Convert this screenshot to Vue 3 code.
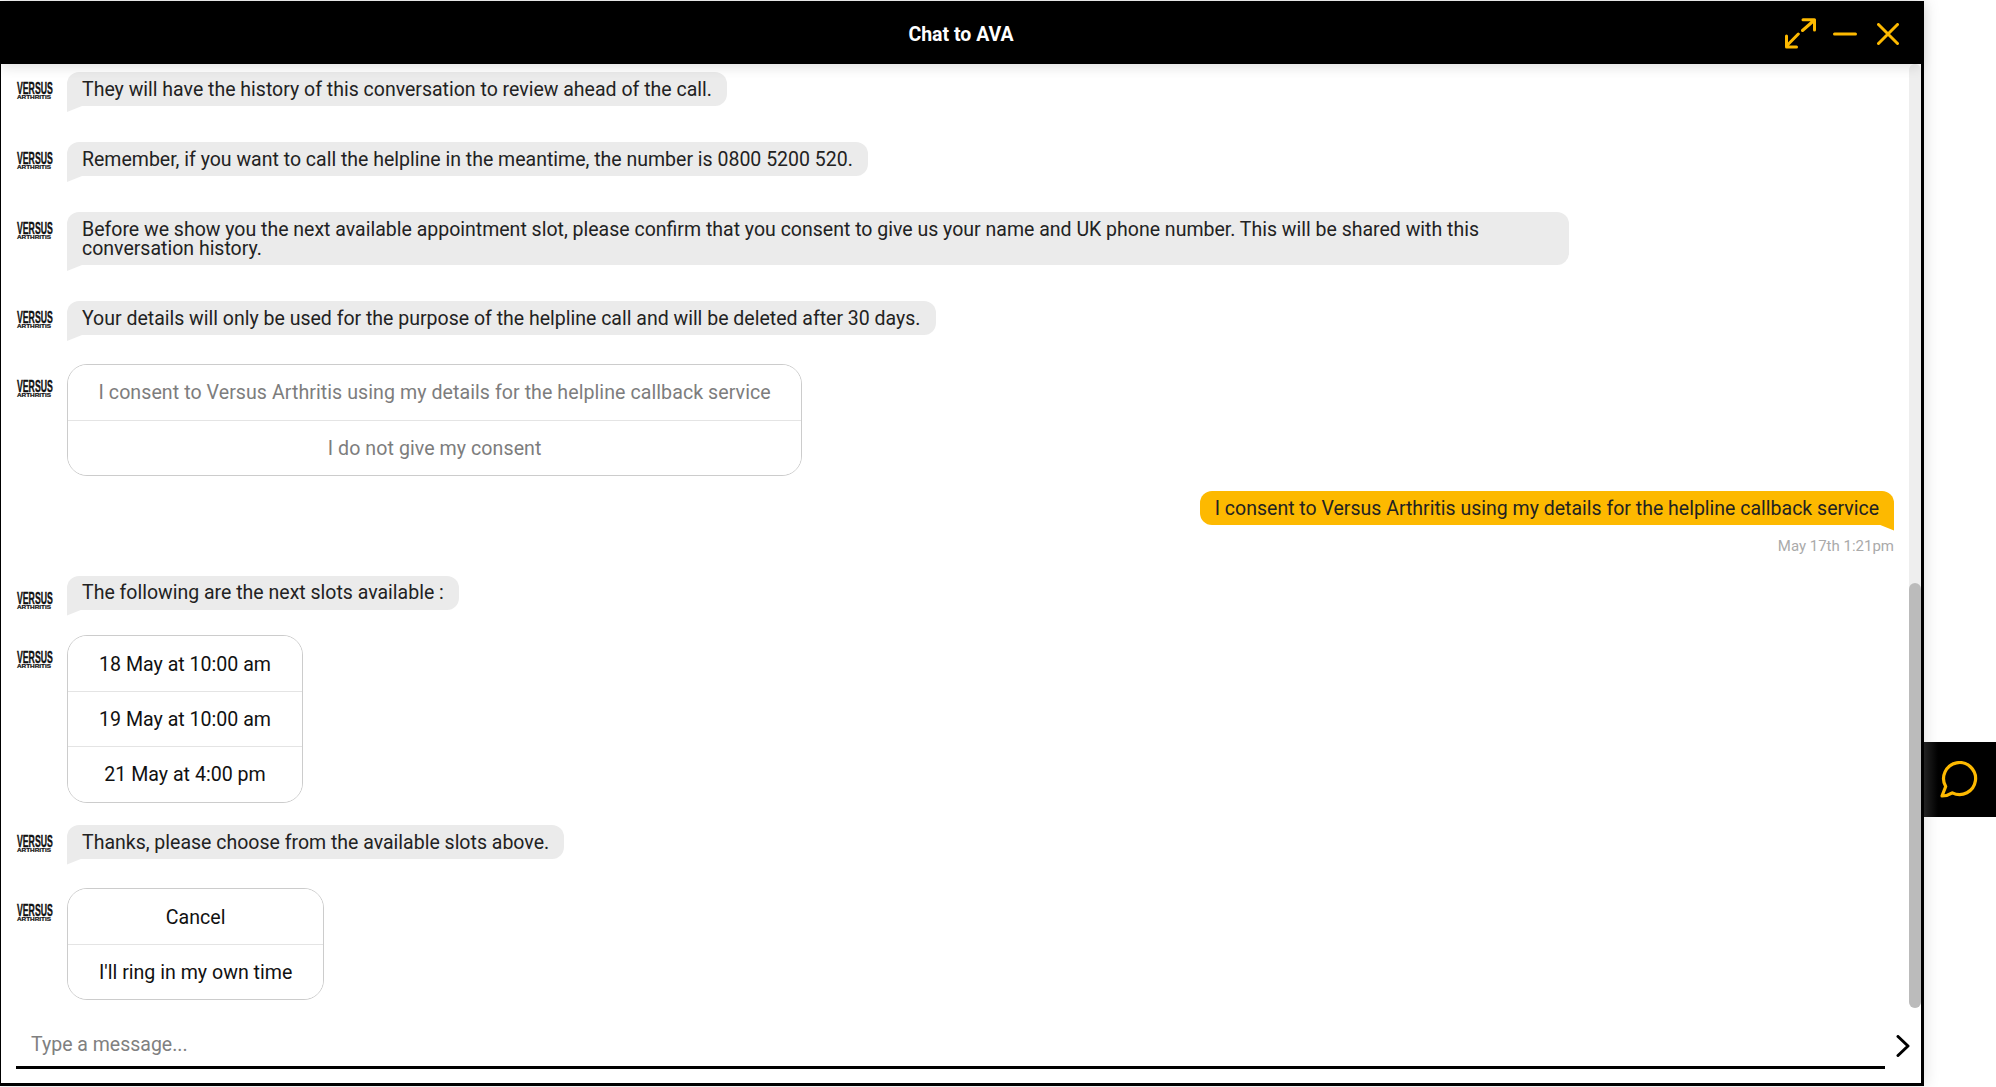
<script setup>
const rows = [
  { type: 'bot', text: 'They will have the history of this conversation to review ahead of the call.', gap: 36 },
  { type: 'bot', text: 'Remember, if you want to call the helpline in the meantime, the number is 0800 5200 520.', gap: 36 },
  { type: 'bot', text: 'Before we show you the next available appointment slot, please confirm that you consent to give us your name and UK phone number. This will be shared with this conversation history.', gap: 36, wide: true },
  { type: 'bot', text: 'Your details will only be used for the purpose of the helpline call and will be deleted after 30 days.', gap: 29 },
  { type: 'opts', options: ['I consent to Versus Arthritis using my details for the helpline callback service', 'I do not give my consent'], muted: true, gap: 15 },
  { type: 'me', text: 'I consent to Versus Arthritis using my details for the helpline callback service', time: 'May 17th 1:21pm', gap: 21 },
  { type: 'bot', text: 'The following are the next slots available :', gap: 25, low: true },
  { type: 'opts', options: ['18 May at 10:00 am', '19 May at 10:00 am', '21 May at 4:00 pm'], gap: 22 },
  { type: 'bot', text: 'Thanks, please choose from the available slots above.', gap: 29 },
  { type: 'opts', options: ['Cancel', "I'll ring in my own time"], gap: 0 }
]
</script>

<template>
  <div class="page">
    <section class="window">
      <header class="head">
        <h1 class="title">Chat to AVA</h1>
        <div class="controls">
          <svg class="ic" width="31" height="31" viewBox="0 0 31 31" fill="none" stroke="#fdb900" stroke-width="3" stroke-linecap="round" stroke-linejoin="round">
            <path d="M18 1.700h11.500V12M17.500 12.500 29.500 2M13.300 16 1.500 28M1.500 18v11h10" />
          </svg>
          <svg class="ic minus" width="24" height="4" viewBox="0 0 24 4" fill="none" stroke="#fdb900" stroke-width="3" stroke-linecap="round">
            <path d="M1.500 2h21" />
          </svg>
          <svg class="ic close" width="22" height="22" viewBox="0 0 22 22" fill="none" stroke="#fdb900" stroke-width="3" stroke-linecap="round">
            <path d="M1.500 1.500l19 19M20.500 1.500l-19 19" />
          </svg>
        </div>
      </header>

      <div class="body">
        <div class="content">
          <div class="list">
            <template v-for="(r, i) in rows" :key="i">
              <div v-if="r.type === 'me'" class="me" :style="{ marginBottom: r.gap + 'px' }">
                <div class="me-bubble">{{ r.text }}</div>
                <div class="time">{{ r.time }}</div>
              </div>
              <div v-else class="bot" :class="{ low: r.low || r.type === 'opts' }" :style="{ marginBottom: r.gap + 'px' }">
                <div class="logo"><span class="l1">VERSUS</span><span class="l2">ARTHRITIS</span></div>
                <div v-if="r.type === 'bot'" class="bubble" :class="{ wide: r.wide }">{{ r.text }}</div>
                <div v-else class="opts" :class="{ muted: r.muted }">
                  <button v-for="o in r.options" :key="o" class="opt">{{ o }}</button>
                </div>
              </div>
            </template>
          </div>
          <div class="track"><div class="thumb"></div></div>
        </div>
        <div class="composer">
          <div class="input">Type a message...</div>
          <svg class="send" width="14" height="22" viewBox="0 0 14 22" fill="none" stroke="#000" stroke-width="3" stroke-linecap="round" stroke-linejoin="round">
            <path d="M2 1.500 12 11 2 20.500" />
          </svg>
        </div>
      </div>
    </section>

    <aside class="tab">
      <svg width="38" height="37" viewBox="0 0 38 37" fill="none" stroke="#fdb900" stroke-width="3.200" stroke-linejoin="round">
        <path d="M2 35 5.700 25.500A16 16 0 1 1 12.300 31.800Q7.500 34.800 2 35Z" />
      </svg>
    </aside>
  </div>
</template>

<style>
html, body { margin: 0; background: #fff; overflow: hidden; }
</style>

<style scoped>
.page {
  width: 1996px;
  height: 1087px;
  position: relative;
  overflow: hidden;
  font-family: Roboto, "Liberation Sans", sans-serif;
  background: #fff;
  padding-top: 1px;
  box-sizing: border-box;
}
.window {
  width: 1924px;
  height: 1085px;
  box-sizing: border-box;
  border-left: 1px solid #000;
  border-right: 3px solid #000;
  border-bottom: 3px solid #000;
  display: flex;
  flex-direction: column;
  background: #fff;
  box-shadow: 0 0 16px rgba(0, 0, 0, 0.14);
}
.head {
  height: 63px;
  flex: none;
  box-sizing: border-box;
  padding-top: 3px;
  background: #000;
  display: flex;
  align-items: center;
  justify-content: center;
  position: relative;
  box-shadow: 0 3px 12px rgba(0, 0, 0, 0.12);
  z-index: 1;
}
.title {
  margin: 0;
  color: #fff;
  font-size: 19.5px;
  font-weight: 700;
}
.controls {
  position: absolute;
  right: 22px;
  top: 17px;
  display: flex;
  align-items: center;
}
.ic { display: block; }
.minus { margin-left: 17px; }
.close { margin-left: 20px; }
.body {
  flex: 1;
  display: flex;
  flex-direction: column;
  min-height: 0;
}
.content {
  flex: 1;
  min-height: 0;
  display: flex;
}
.list {
  flex: 1;
  min-width: 0;
  overflow: hidden;
  padding: 8px 15px 0 16px;
  box-sizing: border-box;
}
.track {
  width: 12px;
  flex: none;
  background: #eee;
  border-radius: 6px;
}
.thumb {
  width: 12px;
  height: 425px;
  margin-top: 519px;
  background: #bbb;
  border-radius: 6px;
}
.bot {
  display: flex;
  align-items: flex-start;
}
.logo {
  width: 50px;
  flex: none;
  margin-top: 8px;
  display: flex;
  flex-direction: column;
  color: #111;
  font-family: "Liberation Sans", sans-serif;
  font-weight: 700;
}
.bot.low .logo { margin-top: 14px; }
.l1 {
  font-size: 16.500px;
  line-height: 16px;
  height: 14px;
  transform: scaleX(0.527);
  transform-origin: left center;
  white-space: nowrap;
  -webkit-text-stroke: 0.4px #111;
}
.l2 {
  font-size: 5.500px;
  line-height: 5px;
  height: 5px;
  margin-top: 1px;
  transform: scaleX(1.16);
  transform-origin: left center;
  white-space: nowrap;
  -webkit-text-stroke: 0.2px #111;
}
.bubble {
  position: relative;
  background: #ebebeb;
  color: #222;
  font-size: 19.5px;
  line-height: 19px;
  padding: 8px 15px 7px;
  border-radius: 12px;
  border-bottom-left-radius: 0;
}
.bubble::after {
  content: "";
  position: absolute;
  left: 0;
  top: 100%;
  width: 15px;
  height: 6px;
  background: #ebebeb;
  clip-path: polygon(0 0, 100% 0, 0 100%);
}
.bubble.wide { max-width: 1472px; }
.low .bubble { padding: 7px 15px 8px; }
.opts {
  border: 1px solid #ccc;
  border-radius: 20px;
  display: flex;
  flex-direction: column;
  overflow: hidden;
}
.opt {
  font: inherit;
  font-size: 19.600px;
  line-height: 22px;
  height: 55.500px;
  padding: 2px 31px 0;
  background: #fff;
  border: 0;
  border-top: 1px solid #e4e4e4;
  color: #111;
  text-align: center;
}
.opt:first-child { border-top: 0; height: 55px; padding-top: 3px; }
.muted .opt { color: #7d7d7d; letter-spacing: 0.06px; height: 54.500px; padding-left: 30.500px; padding-right: 30.500px; }
.muted .opt:first-child { padding-top: 0; height: 55px; }
.me {
  display: flex;
  flex-direction: column;
  align-items: flex-end;
}
.me-bubble {
  position: relative;
  background: #fdb900;
  color: #222;
  font-size: 19.5px;
  line-height: 19px;
  padding: 8px 15px 7px;
  border-radius: 12px;
  border-bottom-right-radius: 0;
}
.me-bubble::after {
  content: "";
  position: absolute;
  right: 0;
  top: 100%;
  width: 15px;
  height: 6px;
  background: #fdb900;
  clip-path: polygon(0 0, 100% 0, 100% 100%);
}
.time {
  color: #aaa;
  font-size: 15px;
  line-height: 18px;
  margin-top: 12px;
}
.composer {
  height: 75px;
  flex: none;
  display: flex;
  align-items: flex-start;
  padding: 15px 0 0 15px;
  box-sizing: border-box;
}
.input {
  width: 1854px;
  height: 43px;
  box-sizing: content-box;
  padding-left: 15px;
  border-bottom: 3px solid #000;
  color: #808080;
  font-size: 19.5px;
  line-height: 44px;
}
.send {
  margin: 12px 0 0 11px;
}
.tab {
  position: absolute;
  left: 1924px;
  top: 742px;
  width: 72px;
  height: 75px;
  background: linear-gradient(90deg, #222 0, #000 14px);
  display: flex;
  align-items: center;
  justify-content: center;
}
.tab svg { margin-left: -2px; }
</style>
